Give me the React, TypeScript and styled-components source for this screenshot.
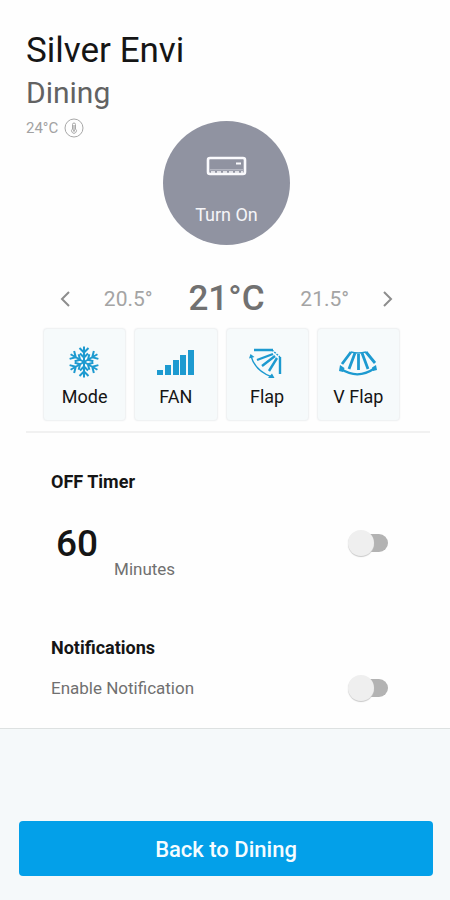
import React, { useState } from "react";
import styled, { createGlobalStyle } from "styled-components";

const GlobalStyle = createGlobalStyle`
  *, *::before, *::after { box-sizing: border-box; }
  body {
    margin: 0;
    background: #fefefe;
    color: #151515;
    font-family: Roboto, "Liberation Sans", sans-serif;
  }
  button { font: inherit; color: inherit; border: 0; background: none; padding: 0; cursor: pointer; }
  h1, h2, p { margin: 0; font-weight: 400; }
`;

const Page = styled.div`
  display: flex;
  flex-direction: column;
  min-height: 100vh;
`;

const Main = styled.main`
  flex: 1;
`;

const Header = styled.header`
  padding: 29px 23px 0 26px;
`;

const DeviceName = styled.h1`
  font-size: 35px;
  line-height: 44px;
`;

const RoomName = styled.p`
  font-size: 30px;
  line-height: 40px;
  color: #626262;
`;

const StatusRow = styled.div`
  display: grid;
  grid-template-columns: 1fr auto 1fr;
  align-items: start;
  padding-top: 5px;
`;

const RoomTemperature = styled.div`
  display: flex;
  align-items: center;
  gap: 6px;
  font-size: 15px;
  line-height: 20px;
  color: #a2a2a2;
`;

const PowerButton = styled.button`
  display: flex;
  flex-direction: column;
  align-items: center;
  justify-content: space-between;
  width: 127px;
  height: 124px;
  margin-top: 3px;
  padding: 34px 0 19px;
  border-radius: 50%;
  background: #9093a1;
  color: #f5f5f8;
  font-size: 18px;
  line-height: 22px;
`;

const TemperatureBar = styled.div`
  display: flex;
  align-items: center;
  justify-content: space-between;
  height: 44px;
  margin: 32px 55px 0 58px;
`;

const ArrowButton = styled.button`
  display: flex;
  color: #8d8d8d;
`;

const NearbyTemperature = styled.button`
  && { color: #a4a4a4; }
  font-size: 21px;
  line-height: 24px;
`;

const CurrentTemperature = styled.output`
  padding: 0 4px;
  font-size: 35px;
  line-height: 44px;
  font-weight: 500;
  color: #717171;
`;

const Controls = styled.div`
  display: grid;
  grid-template-columns: repeat(4, 1fr);
  gap: 8px;
  margin: 7px 50px 0 43px;
`;

const ControlTile = styled.button`
  && {
    border: 1px solid #f0f2f3;
    background: #f6fafb;
  }
  display: flex;
  flex-direction: column;
  align-items: center;
  height: 93px;
  padding-top: 16px;
  border-radius: 4px;
  box-shadow: 0 0 2px #f1f3f4;
  font-size: 18px;
  line-height: 22px;
  svg { margin-bottom: 7px; }
`;

const Divider = styled.hr`
  height: 2px;
  margin: 10px 20px 0 26px;
  border: 0;
  background: #f1f1f1;
`;

const Section = styled.section<{ $top: number }>`
  padding: ${({ $top }) => $top}px 62px 0 51px;
`;

const SectionTitle = styled.h2`
  font-size: 18px;
  line-height: 22px;
  font-weight: 700;
`;

const SettingRow = styled.div<{ $gap: number }>`
  display: flex;
  align-items: flex-start;
  justify-content: space-between;
  margin-top: ${({ $gap }) => $gap}px;
`;

const Duration = styled.label`
  display: flex;
  align-items: flex-end;
  gap: 16px;
  padding-left: 5px;
`;

const DurationValue = styled.span`
  font-size: 37px;
  line-height: 44px;
  font-weight: 500;
  margin-bottom: 14px;
`;

const SettingLabel = styled.span`
  font-size: 17px;
  line-height: 22px;
  color: #707070;
`;

const ToggleSlot = styled.div<{ $height: number }>`
  display: flex;
  align-items: center;
  height: ${({ $height }) => $height}px;
`;

const ToggleInput = styled.input`
  appearance: none;
  display: flex;
  align-items: center;
  width: 34px;
  height: 18px;
  margin: 0;
  border-radius: 9px;
  background: #b3b3b3;
  cursor: pointer;
  &::before {
    content: "";
    width: 26px;
    height: 26px;
    margin-left: -6px;
    border-radius: 50%;
    background: #efefef;
    box-shadow: 0 1px 1px #c9c9c9;
  }
  &:checked { background: #8bd0f2; }
  &:checked::before { margin-left: 14px; background: #039fe8; }
`;

const Footer = styled.footer`
  padding: 92px 17px 24px 19px;
  border-top: 1px solid #dde1e1;
  background: #f5f9fa;
`;

const BackButton = styled.button`
  && {
    padding-top: 2px;
    background: #03a0e9;
    color: #f5fcff;
  }
  width: 100%;
  height: 55px;
  border-radius: 4px;
  font-size: 22px;
  line-height: 28px;
  font-weight: 500;
`;

const BLUE = "#1d9ad0";

const ThermometerIcon = () => (
  <svg width="20" height="20" viewBox="0 0 20 20" fill="none" stroke="#a8a8a8" aria-hidden="true">
    <circle cx="10" cy="10" r="9" strokeWidth="1" />
    <path d="M8.5 11V6.5a1.5 1.5 0 0 1 3 0V11a2.4 2.4 0 1 1-3 0Z" strokeWidth="1" />
    <path d="M10 7v5" strokeWidth="1.2" />
    <circle cx="10" cy="12.8" r="1" fill="#a8a8a8" stroke="none" />
  </svg>
);

const AirConditionerIcon = () => (
  <svg width="42" height="22" viewBox="0 0 42 22" fill="none" stroke="#fafafd" aria-hidden="true">
    <rect x="2" y="3" width="37" height="16" rx="2" strokeWidth="2.6" />
    <path d="M4 14.8H37" strokeWidth="1" opacity="0.5" />
    <path d="M5 17H37" strokeWidth="1.6" strokeDasharray="4 2" />
    <path d="M30 8.5h5" strokeWidth="2" />
  </svg>
);

const ChevronIcon = ({ d }: { d: string }) => (
  <svg width="14" height="18" viewBox="0 0 14 18" fill="none" stroke="currentColor" strokeWidth="2" aria-hidden="true">
    <path d={d} />
  </svg>
);

const SnowflakeIcon = () => (
  <svg width="40" height="34" viewBox="-19 -17 40 34" fill="none" stroke={BLUE} strokeWidth="2" aria-hidden="true">
    {[0, 60, 120, 180, 240, 300].map((angle) => (
      <path key={angle} transform={`rotate(${angle})`} d="M0 0V-15.5M-4.5-14L0-9.5L4.5-14M-4-8.5L0-4.5L4-8.5" />
    ))}
  </svg>
);

const FanIcon = () => (
  <svg width="40" height="34" viewBox="0 0 40 34" fill={BLUE} aria-hidden="true">
    <path d="M1 25h6v5H1zM9 20h6v10H9zM17 15h6v15h-6zM24 10h6v20h-6zM32 5h6v25h-6z" />
  </svg>
);

const FlapIcon = () => (
  <svg width="40" height="34" viewBox="0 0 40 34" fill="none" stroke={BLUE} strokeWidth="2.4" aria-hidden="true">
    <path d="M7 5H26M26 9L10 15M28 11L15 21M30 13L22 26M33 12V29" />
    <path d="M25 5L33 12" strokeWidth="1.4" strokeDasharray="2 1" />
    <path d="M4 11Q8 26 25 32" strokeWidth="1.4" />
    <path d="M2 13.500L3.500 9L7.500 12ZM21 33L25 28.500L27.500 33Z" fill={BLUE} stroke="none" />
  </svg>
);

const VerticalFlapIcon = () => (
  <svg width="40" height="34" viewBox="0 0 40 34" fill="none" stroke={BLUE} strokeWidth="2.8" aria-hidden="true">
    <path d="M13 7L4 19M17 8L11 24M20.500 9V25M24 8L30 24M28 7L37 18" />
    <path d="M13 7Q20 9 28 7" strokeWidth="1.4" />
    <path d="M3 24Q20 35 37 23" strokeWidth="2.2" />
    <path d="M1 26L2 20L6.500 23L5 27ZM39 25L38 20L34 22.500L35 26Z" fill={BLUE} stroke="none" />
  </svg>
);

const CONTROLS = [
  { label: "Mode", Icon: SnowflakeIcon },
  { label: "FAN", Icon: FanIcon },
  { label: "Flap", Icon: FlapIcon },
  { label: "V Flap", Icon: VerticalFlapIcon },
];

export default function App() {
  const [target, setTarget] = useState(21);
  const [timer, setTimer] = useState(false);
  const [notify, setNotify] = useState(false);
  const lower = () => setTarget(target - 0.5);
  const raise = () => setTarget(target + 0.5);

  return (
    <Page>
      <GlobalStyle />
      <Main>
        <Header>
          <DeviceName>Silver Envi</DeviceName>
          <RoomName>Dining</RoomName>
          <StatusRow>
            <RoomTemperature>24°C <ThermometerIcon /></RoomTemperature>
            <PowerButton type="button"><AirConditionerIcon />Turn On</PowerButton>
          </StatusRow>
        </Header>
        <TemperatureBar>
          <ArrowButton type="button" aria-label="Lower temperature" onClick={lower}>
            <ChevronIcon d="M11 2L4 9L11 16" />
          </ArrowButton>
          <NearbyTemperature type="button" onClick={lower}>{target - 0.5}°</NearbyTemperature>
          <CurrentTemperature>{target}°C</CurrentTemperature>
          <NearbyTemperature type="button" onClick={raise}>{target + 0.5}°</NearbyTemperature>
          <ArrowButton type="button" aria-label="Raise temperature" onClick={raise}>
            <ChevronIcon d="M3 2L10 9L3 16" />
          </ArrowButton>
        </TemperatureBar>
        <Controls>
          {CONTROLS.map(({ label, Icon }) => (
            <ControlTile key={label} type="button"><Icon />{label}</ControlTile>
          ))}
        </Controls>
        <Divider />
        <Section $top={38}>
          <SectionTitle>OFF Timer</SectionTitle>
          <SettingRow $gap={29}>
            <Duration htmlFor="off-timer">
              <DurationValue>60</DurationValue>
              <SettingLabel>Minutes</SettingLabel>
            </Duration>
            <ToggleSlot $height={42}>
              <ToggleInput id="off-timer" type="checkbox" role="switch" checked={timer} onChange={() => setTimer(!timer)} />
            </ToggleSlot>
          </SettingRow>
        </Section>
        <Section $top={57}>
          <SectionTitle>Notifications</SectionTitle>
          <SettingRow $gap={18}>
            <SettingLabel as="label" htmlFor="notifications">Enable Notification</SettingLabel>
            <ToggleSlot $height={22}>
              <ToggleInput id="notifications" type="checkbox" role="switch" checked={notify} onChange={() => setNotify(!notify)} />
            </ToggleSlot>
          </SettingRow>
        </Section>
      </Main>
      <Footer>
        <BackButton type="button">Back to Dining</BackButton>
      </Footer>
    </Page>
  );
}
